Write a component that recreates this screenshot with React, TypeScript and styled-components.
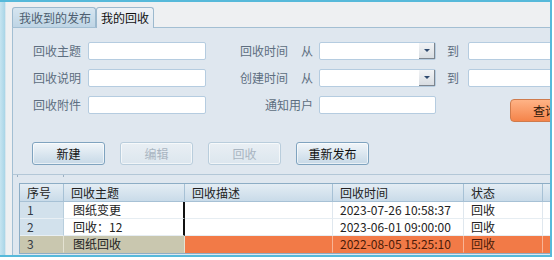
import React from 'react';
import styled, { createGlobalStyle } from 'styled-components';

const GlobalStyle = createGlobalStyle`
  html, body {
    margin: 0;
    padding: 0;
    background: #ffffff;
  }
  body {
    font-family: "Noto Sans CJK SC", "Liberation Sans", sans-serif;
    font-size: 12px;
  }
  * {
    box-sizing: border-box;
  }
`;

type Row = {
  no: string;
  subject: string;
  desc: string;
  time: string;
  status: string;
  picked?: boolean;
};

const rows: Row[] = [
  { no: '1', subject: '图纸变更', desc: '', time: '2023-07-26 10:58:37', status: '回收' },
  { no: '2', subject: '回收：12', desc: '', time: '2023-06-01 09:00:00', status: '回收' },
  { no: '3', subject: '图纸回收', desc: '', time: '2022-08-05 15:25:10', status: '回收', picked: true },
];

const App: React.FC = () => {
  return (
    <>
      <GlobalStyle />
      <Window>
        <LeftStrip />
        <Body>
          <TabBar>
            <Tab>我收到的发布</Tab>
            <Tab $active>我的回收</Tab>
          </TabBar>

          <Panel>
            <Form>
              <Label>回收主题</Label>
              <TextBox />
              <LabelGroup>
                <span>回收时间</span>
                <span>从</span>
              </LabelGroup>
              <Combo>
                <ComboArrow />
              </Combo>
              <ToLabel>到</ToLabel>
              <TextBox />

              <Label>回收说明</Label>
              <TextBox />
              <LabelGroup>
                <span>创建时间</span>
                <span>从</span>
              </LabelGroup>
              <Combo>
                <ComboArrow />
              </Combo>
              <ToLabel>到</ToLabel>
              <TextBox />

              <Label>回收附件</Label>
              <TextBox />
              <LabelGroup>
                <span>通知用户</span>
              </LabelGroup>
              <TextBox />
              <span />
              <QueryButton>查询</QueryButton>
            </Form>

            <ButtonRow>
              <ActionButton>新建</ActionButton>
              <ActionButton disabled>编辑</ActionButton>
              <ActionButton disabled>回收</ActionButton>
              <ActionButton>重新发布</ActionButton>
            </ButtonRow>

            <Splitter />
            <TickRow>
              <Tick $left={4} />
              <Tick $left={45} />
            </TickRow>

            <Grid>
              <HeadCell>序号</HeadCell>
              <HeadCell>回收主题</HeadCell>
              <HeadCell>回收描述</HeadCell>
              <HeadCell>回收时间</HeadCell>
              <HeadCell>状态</HeadCell>
              <HeadCell>回收人</HeadCell>
              {rows.map(r => (
                <React.Fragment key={r.no}>
                  <IndexCell $picked={r.picked}>{r.no}</IndexCell>
                  <SubjectCell $picked={r.picked}>{r.subject}</SubjectCell>
                  <Cell $picked={r.picked}>{r.desc}</Cell>
                  <Cell $picked={r.picked}>{r.time}</Cell>
                  <Cell $picked={r.picked}>{r.status}</Cell>
                  <Cell $picked={r.picked} />
                </React.Fragment>
              ))}
            </Grid>
          </Panel>
        </Body>
      </Window>
    </>
  );
};

const Window = styled.div`
  width: 552px;
  height: 257px;
  border: 2px solid #56b9da;
  border-left: none;
  display: flex;
  overflow: hidden;
  background: #eef0f2;
`;

const LeftStrip = styled.div`
  width: 6px;
  flex-shrink: 0;
  background: linear-gradient(to right, #c6e4f0, #a9d5e7);
  border-right: 1px solid #d8e6ee;
`;

const Body = styled.div`
  flex: 1;
  min-width: 0;
  display: flex;
  flex-direction: column;
  padding-left: 6px;
`;

const TabBar = styled.div`
  height: 25px;
  flex-shrink: 0;
  display: flex;
  align-items: flex-end;
  position: relative;
  z-index: 1;
`;

const Tab = styled.div<{ $active?: boolean }>`
  height: ${({ $active }) => ($active ? 21 : 20)}px;
  margin-bottom: ${({ $active }) => ($active ? -1 : 0)}px;
  padding: 0 4px 0 ${({ $active }) => ($active ? 4 : 6)}px;
  border: 1px solid #9cb9ce;
  border-bottom: none;
  border-radius: 3px 3px 0 0;
  line-height: 19px;
  font-size: 12px;
  color: ${({ $active }) => ($active ? '#111111' : '#4d5e70')};
  background: ${({ $active }) =>
    $active ? 'linear-gradient(#eef2f6, #dfe7ef)' : 'linear-gradient(#d6e5f0, #bfd5e5)'};
  white-space: nowrap;
`;

const Panel = styled.div`
  flex: 1;
  min-height: 0;
  border-top: 1px solid #a3bfd3;
  border-left: 1px solid #a3bfd3;
  background: #dfe7ef;
  display: flex;
  flex-direction: column;
  overflow: hidden;
`;

const Form = styled.div`
  display: grid;
  grid-template-columns: 75px 118px 113px 117px 32px 120px;
  grid-auto-rows: 18px;
  row-gap: 9px;
  padding-top: 14px;
  align-items: center;
  flex-shrink: 0;
`;

const Label = styled.div`
  padding-right: 7px;
  text-align: right;
  color: #5d6e80;
  line-height: 18px;
  white-space: nowrap;
`;

const LabelGroup = styled.div`
  display: flex;
  justify-content: flex-end;
  gap: 13px;
  padding-right: 6px;
  color: #5d6e80;
  line-height: 18px;
  white-space: nowrap;
`;

const ToLabel = styled.div`
  padding-left: 11px;
  color: #5d6e80;
  line-height: 18px;
`;

const TextBox = styled.div`
  height: 18px;
  background: #ffffff;
  border: 1px solid #b5cce0;
  border-radius: 2px;
`;

const Combo = styled.div`
  height: 18px;
  background: #ffffff;
  border: 1px solid #b5cce0;
  border-radius: 2px;
  display: flex;
  justify-content: flex-end;
`;

const ComboArrow = styled.div`
  width: 16px;
  height: 16px;
  background: linear-gradient(#f2f4f6, #d8dde2);
  border-right: 1px solid #7d858e;
  border-bottom: 1px solid #7d858e;
  display: flex;
  align-items: center;
  justify-content: center;

  &::after {
    content: '';
    border-left: 3px solid transparent;
    border-right: 3px solid transparent;
    border-top: 3px solid #2f4a6e;
  }
`;

const QueryButton = styled.div`
  align-self: start;
  margin: 3px 0 0 42px;
  height: 23px;
  padding-left: 22px;
  border: 1px solid #cf7b4c;
  border-radius: 4px;
  background: linear-gradient(#ffb386, #f4844a);
  color: #2a1408;
  line-height: 21px;
  white-space: nowrap;
`;

const ButtonRow = styled.div`
  display: flex;
  gap: 15px;
  padding-left: 19px;
  margin-top: 28px;
  flex-shrink: 0;
`;

const ActionButton = styled.button`
  width: 73px;
  height: 23px;
  padding: 0;
  border: 1px solid #7fa3bf;
  border-radius: 3px;
  background: linear-gradient(#f0f5f9, #c7d9e7);
  box-shadow: inset 0 0 0 1px rgba(255, 255, 255, 0.6);
  font-family: "Noto Sans CJK SC", sans-serif;
  font-size: 12px;
  color: #111111;

  &:disabled {
    border-color: #b9cddc;
    background: linear-gradient(#e9eff4, #dce6ee);
    color: #a9b5c1;
  }
`;

const Splitter = styled.div`
  margin-top: 9px;
  height: 1px;
  background: #b3c7d7;
  flex-shrink: 0;
`;

const TickRow = styled.div`
  display: flex;
  height: 2px;
  flex-shrink: 0;
`;

const Tick = styled.div<{ $left: number }>`
  width: 1px;
  height: 2px;
  margin-left: ${({ $left }) => $left}px;
  background: #9cb0c2;
`;

const Grid = styled.div`
  margin: 6px 0 0 6px;
  display: grid;
  grid-template-columns: 44px 121px 148px 131px 79px 60px;
  grid-template-rows: 18px repeat(3, 17px);
  border: 1px solid #8dadc5;
  border-right: none;
  background: #ffffff;
  flex-shrink: 0;
  width: max-content;
`;

const HeadCell = styled.div`
  padding-left: 7px;
  background: linear-gradient(#e4edf4, #c9dbe9);
  border-right: 1px solid #a7c1d5;
  border-bottom: 1px solid #a7c1d5;
  color: #222222;
  line-height: 17px;
  white-space: nowrap;
  overflow: hidden;
`;

const Cell = styled.div<{ $picked?: boolean }>`
  padding-left: 7px;
  background: ${({ $picked }) => ($picked ? '#f27a47' : '#ffffff')};
  border-right: 1px solid ${({ $picked }) => ($picked ? '#f8b496' : '#dfe7ee')};
  border-bottom: 1px solid ${({ $picked }) => ($picked ? '#f27a47' : '#e6edf2')};
  color: ${({ $picked }) => ($picked ? '#4a1a08' : '#222222')};
  line-height: 16px;
  white-space: nowrap;
  overflow: hidden;
`;

const IndexCell = styled(Cell)`
  background: ${({ $picked }) => ($picked ? '#c9c7af' : '#d2e1ec')};
  border-right: 1px solid ${({ $picked }) => ($picked ? '#e4e2d2' : '#b8cedd')};
  border-bottom: 1px solid ${({ $picked }) => ($picked ? '#c9c7af' : '#e8eff4')};
  color: #333a44;
`;

const SubjectCell = styled(Cell)`
  padding-left: 9px;
  background: ${({ $picked }) => ($picked ? '#c9c7af' : '#ffffff')};
  border-right: ${({ $picked }) => ($picked ? '1px solid #e4e2d2' : '2px solid #111111')};
  border-bottom: 1px solid ${({ $picked }) => ($picked ? '#c9c7af' : '#e6edf2')};
  color: #222222;
`;

export default App;
